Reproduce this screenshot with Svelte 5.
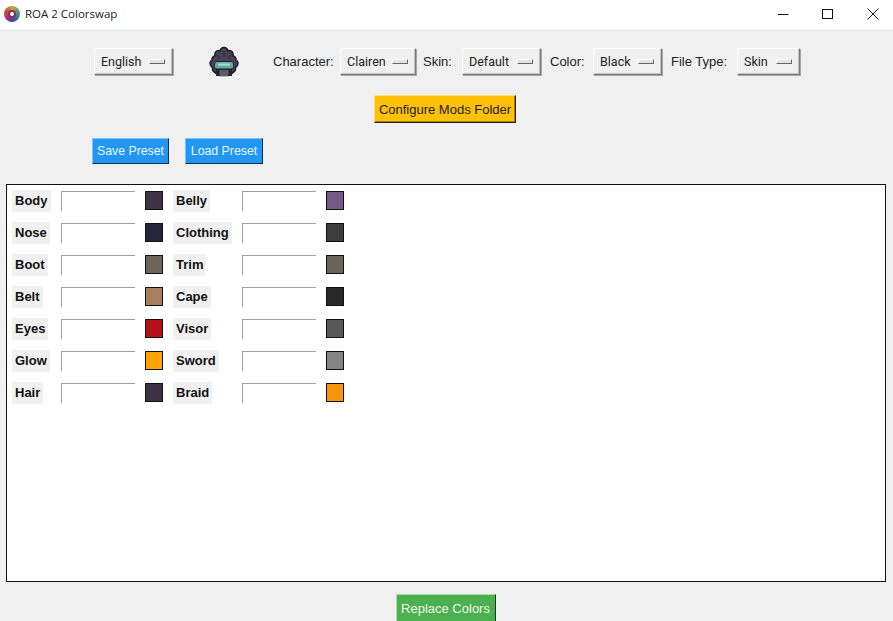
<script>
  const left = [
    ['Body', '#3d3346'], ['Nose', '#26243a'], ['Boot', '#6b6459'], ['Belt', '#a87f5e'],
    ['Eyes', '#b01218'], ['Glow', '#ffa50a'], ['Hair', '#3b3244']
  ];
  const right = [
    ['Belly', '#755a86'], ['Clothing', '#3c3b3d'], ['Trim', '#696359'], ['Cape', '#282828'],
    ['Visor', '#585858'], ['Sword', '#848484'], ['Braid', '#f7930e']
  ];
  const rows = left.map((l, i) => [l, right[i]]);
</script>

<div class="window">
  <header class="titlebar">
    <span class="logo"><span class="logo-core"></span></span>
    <span class="title">ROA 2 Colorswap</span>
    <div class="controls">
      <svg width="14" height="14" viewBox="0 0 14 14"><path d="M2 7.500h10.500" stroke="#111" fill="none"/></svg>
      <svg width="14" height="14" viewBox="0 0 14 14"><rect x="1.500" y="2.500" width="10" height="9" stroke="#111" fill="none"/></svg>
      <svg width="14" height="14" viewBox="0 0 14 14"><path d="M1.500 1.500l11 11M12.500 1.500l-11 11" stroke="#222" fill="none"/></svg>
    </div>
  </header>

  <div class="toolbar">
    <button class="menu english">English<i></i></button>
    <svg class="avatar" width="32" height="32" viewBox="0 0 32 32">
      <path d="M16 1.500c2 0 3.500 1.500 4 3.500 2-1 4.500 0 5 2.500.3 1 .2 2 0 2.500 2 .3 3.500 2 3 4 1.500 1 2.500 3 1.500 5-.5 1.500-1.500 2-2 2.500.2 2-.5 4-2.500 5-1.500 2-3 3-5 3H12c-2 0-3.500-1-5-3-2-1-2.700-3-2.500-5-.5-.5-1.500-1-2-2.500-1-2 0-4 1.500-5-.5-2 1-3.700 3-4-.2-.5-.3-1.500 0-2.500.5-2.500 3-3.500 5-2.500.5-2 2-3.500 4-3.500z" fill="#4a4058" stroke="#1e1b27" stroke-width="1.500"/>
      <path d="M9 9l3 3M23 9l-3 3M16 5v6" stroke="#352e42" stroke-width="1.500" fill="none"/>
      <path d="M8 22h16v8h-3v-5H11v5H8z" fill="#26222e"/>
      <rect x="6.500" y="15.500" width="19" height="7.500" rx="2.500" fill="#62aca0" stroke="#222630"/>
      <rect x="10" y="17.500" width="12" height="2" fill="#a4e0d0"/>
      <rect x="12" y="24" width="8" height="6" fill="#5d5a68"/>
    </svg>
    <span class="lbl character">Character:</span>
    <button class="menu clairen">Clairen<i></i></button>
    <span class="lbl skin">Skin:</span>
    <button class="menu default">Default<i></i></button>
    <span class="lbl color">Color:</span>
    <button class="menu black">Black<i></i></button>
    <span class="lbl filetype">File Type:</span>
    <button class="menu skintype">Skin<i></i></button>
  </div>

  <div class="config-row"><button class="btn amber">Configure Mods Folder</button></div>

  <div class="preset-row">
    <button class="btn blue save">Save Preset</button>
    <button class="btn blue">Load Preset</button>
  </div>

  <main class="panel">
    {#each rows as pair}
      <div class="row">
        {#each pair as [name, col]}
          <span class="name">{name}</span>
          <input class="field" type="text" />
          <span class="swatch" style:background={col}></span>
        {/each}
      </div>
    {/each}
  </main>

  <div class="footer"><button class="btn green">Replace Colors</button></div>
</div>

<style>
  :global(body) { margin: 0; background: #f0f0f0; }
  .window {
    width: 893px; height: 621px; overflow: hidden; background: #f0f0f0;
    display: flex; flex-direction: column; color: #111;
    font-family: "Liberation Sans", Arial, sans-serif;
  }
  button { font: inherit; margin: 0; cursor: default; }

  .titlebar { height: 29px; box-sizing: border-box; padding: 0 0 2px 4px; background: #fff; display: flex; align-items: center; flex: none; }
  .logo {
    width: 16px; height: 16px; border-radius: 50%; display: flex; align-items: center; justify-content: center;
    background: conic-gradient(#c9a63a, #5aa36a, #2f7f9c, #4a3f8f, #a83a6e, #c9503a, #c9a63a);
  }
  .logo-core { width: 8px; height: 8px; border-radius: 50%; background: #fff; border: 2px solid #8a2f5a; box-sizing: border-box; }
  .title { margin-left: 5px; font: 11.500px "Open Sans", sans-serif; color: #222; }
  .controls { margin-left: auto; display: flex; gap: 31px; padding-right: 13px; }

  .toolbar { height: 52px; flex: none; display: flex; align-items: center; font-size: 13px; padding: 13px 0 0 94px; box-sizing: border-box; }
  .lbl { color: #222; white-space: nowrap; }
  .menu {
    box-sizing: border-box; height: 27px; padding: 0 0 0 6px; display: flex; align-items: center; position: relative;
    background: #f0f0f0; color: #222; border: 1px solid; border-color: #fff #7a7a7a #7a7a7a #fff;
    box-shadow: 1px 1px 0 #a8a8a8, inset -1px -1px 0 #c4c4c4; font: 12.500px Roboto, sans-serif;
  }
  .menu i {
    position: absolute; right: 7px; top: 10px; width: 16px; height: 5px; box-sizing: border-box;
    border: 1px solid; border-color: #fff #666 #666 #fff; background: #e4e4e4;
  }
  .english { width: 79px; margin-right: 35px; }
  .avatar { margin-right: 33px; }
  .character { width: 67px; }
  .clairen { width: 76px; }
  .skin { margin-left: 7px; width: 39px; }
  .default { width: 79px; }
  .color { margin-left: 9px; width: 43px; }
  .black { width: 69px; }
  .filetype { margin-left: 9px; width: 66px; }
  .skintype { width: 63px; }

  .btn {
    box-sizing: border-box; font-size: 13px; padding: 0; border: 1px solid;
    white-space: nowrap; text-align: center;
  }
  .config-row { display: flex; justify-content: center; height: 42px; flex: none; padding: 14px 3px 0 0; box-sizing: border-box; }
  .amber {
    width: 142px; height: 28px; background: #ffc107; color: #222;
    border-color: #ffe07a #222 #222 #ffe07a; box-shadow: inset -1px -1px 0 #a88008;
  }
  .preset-row { display: flex; gap: 16px; padding: 15px 0 0 92px; height: 61px; flex: none; box-sizing: border-box; align-items: flex-start; }
  .blue {
    width: 77px; height: 26px; background: #2196f3; color: #e8f6ff; padding-bottom: 1px;
    border-color: #7cc4fa #102a50 #102a50 #7cc4fa; font-size: 12.300px;
  }
  .blue:not(.save) { width: 78px; }

  .panel {
    box-sizing: border-box; margin-left: 6px; width: 880px; height: 398px; flex: none;
    background: #fff; border: 1px solid #111; padding: 0 0 0 5px;
    display: flex; flex-direction: column;
  }
  .row {
    height: 32px; flex: none; display: grid; align-items: center;
    grid-template-columns: 49px 74px 38px 69px 74px 28px;
  }
  .name {
    justify-self: start; background: #f0f0f0; padding: 3px 3px; font-weight: 700; font-size: 13px;
    line-height: 16px; color: #111;
  }
  .field {
    box-sizing: border-box; width: 74px; height: 20px; padding: 0; margin: -1px 0 0;
    border: 0; border-top: 1px solid #a0a0a0; border-left: 1px solid #a0a0a0; background: #fff; outline: 0;
  }
  .swatch { box-sizing: border-box; display: block; width: 18px; height: 19px; margin: -2px 0 0 10px; border: 1px solid #111; }

  .footer { display: flex; justify-content: center; padding: 12px 2px 0 0; flex: none; }
  .green {
    width: 100px; height: 28px; background: #4caf50; color: #ecf9ec;
    border-color: #a4e0a4 #1c3a1c #1c3a1c #a4e0a4;
  }
</style>
